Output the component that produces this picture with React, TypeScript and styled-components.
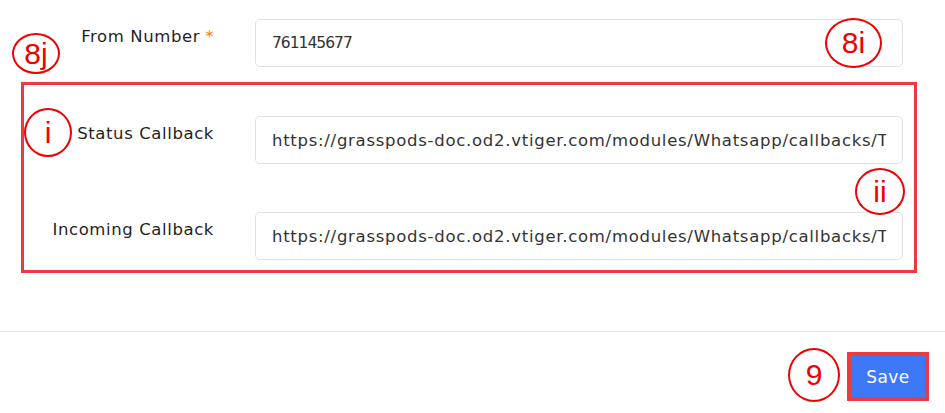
import React from "react";
import styled, { createGlobalStyle } from "styled-components";

const Global = createGlobalStyle`
  html, body { margin: 0; padding: 0; background: #ffffff; }
  body { font-family: "DejaVu Sans", "Noto Sans", sans-serif; color: #1f1f1f; }
  * { box-sizing: border-box; }
`;

const Page = styled.div`
  position: relative;
  width: 945px;
  height: 413px;
  padding-top: 19px;
  overflow: hidden;
`;

const Row = styled.div<{ $labelWidth: number; $padRight: number }>`
  display: grid;
  grid-template-columns: ${(p) => p.$labelWidth}px 1fr;
  column-gap: 41px;
  padding-right: ${(p) => p.$padRight}px;
  align-items: start;
`;

const Label = styled.label`
  text-align: right;
  font-size: 16.5px;
  letter-spacing: 0.6px;
  line-height: 20px;
  padding-top: 8px;
  color: #1f1f1f;
  white-space: nowrap;
`;

const Required = styled.span`
  color: #f07c1b;
  margin-left: 5px;
`;

const Field = styled.input<{ $compact?: boolean }>`
  display: block;
  width: 100%;
  height: 48px;
  margin: 0;
  border: 1px solid #dfe1e6;
  border-radius: 5px;
  padding: 0 16px;
  font-family: "DejaVu Sans", "Noto Sans", sans-serif;
  font-size: ${(p) => (p.$compact ? "15.5px" : "16.5px")};
  letter-spacing: ${(p) => (p.$compact ? "-1px" : "0.72px")};
  color: #333;
  background: #fff;
  outline: none;
`;

const Highlight = styled.div`
  margin: 15px 28px 0 21px;
  border: 3px solid #ec3b3d;
  padding: 31px 11px 10px 0;
  display: flex;
  flex-direction: column;
  gap: 48px;
`;

const Divider = styled.div`
  margin-top: 58px;
  height: 1px;
  background: #e6e6e6;
`;

const Footer = styled.div`
  display: flex;
  justify-content: flex-end;
  padding: 20px 16px 0 0;
`;

const ButtonFrame = styled.div`
  border: 4px solid #ec3b3d;
  display: flex;
`;

const SaveButton = styled.button`
  width: 74px;
  height: 41px;
  border: none;
  background: #3c78f8;
  color: #fff;
  font-family: "DejaVu Sans", sans-serif;
  font-size: 17px;
  letter-spacing: 0.4px;
  cursor: pointer;
`;

const Callout = styled.div<{ $x: number; $y: number; $w: number; $h: number }>`
  position: absolute;
  left: ${(p) => p.$x}px;
  top: ${(p) => p.$y}px;
  width: ${(p) => p.$w}px;
  height: ${(p) => p.$h}px;
  border: 2px solid #f00000;
  border-radius: 50%;
  display: flex;
  align-items: center;
  justify-content: center;
  color: #f00000;
  font-family: "Liberation Sans", Arial, sans-serif;
  font-size: 30px;
  line-height: 1;
  background: #fff;
`;

const URL = "https://grasspods-doc.od2.vtiger.com/modules/Whatsapp/callbacks/Twilio";

export default function App() {
  return (
    <>
      <Global />
      <Page>
        <Row $labelWidth={214} $padRight={42}>
          <Label>
            From Number<Required>*</Required>
          </Label>
          <Field $compact readOnly value="761145677" />
        </Row>
        <Highlight>
          <Row $labelWidth={190} $padRight={0}>
            <Label>Status Callback</Label>
            <Field readOnly value={URL} />
          </Row>
          <Row $labelWidth={190} $padRight={0}>
            <Label>Incoming Callback</Label>
            <Field readOnly value={URL} />
          </Row>
        </Highlight>
        <Divider />
        <Footer>
          <ButtonFrame>
            <SaveButton>Save</SaveButton>
          </ButtonFrame>
        </Footer>
        <Callout $x={12} $y={33} $w={48} $h={41}>8j</Callout>
        <Callout $x={825} $y={18} $w={57} $h={50}>8i</Callout>
        <Callout $x={24} $y={108} $w={48} $h={49}>i</Callout>
        <Callout $x={855} $y={168} $w={50} $h={47}>ii</Callout>
        <Callout $x={788} $y={348} $w={52} $h={54}>9</Callout>
      </Page>
    </>
  );
}
